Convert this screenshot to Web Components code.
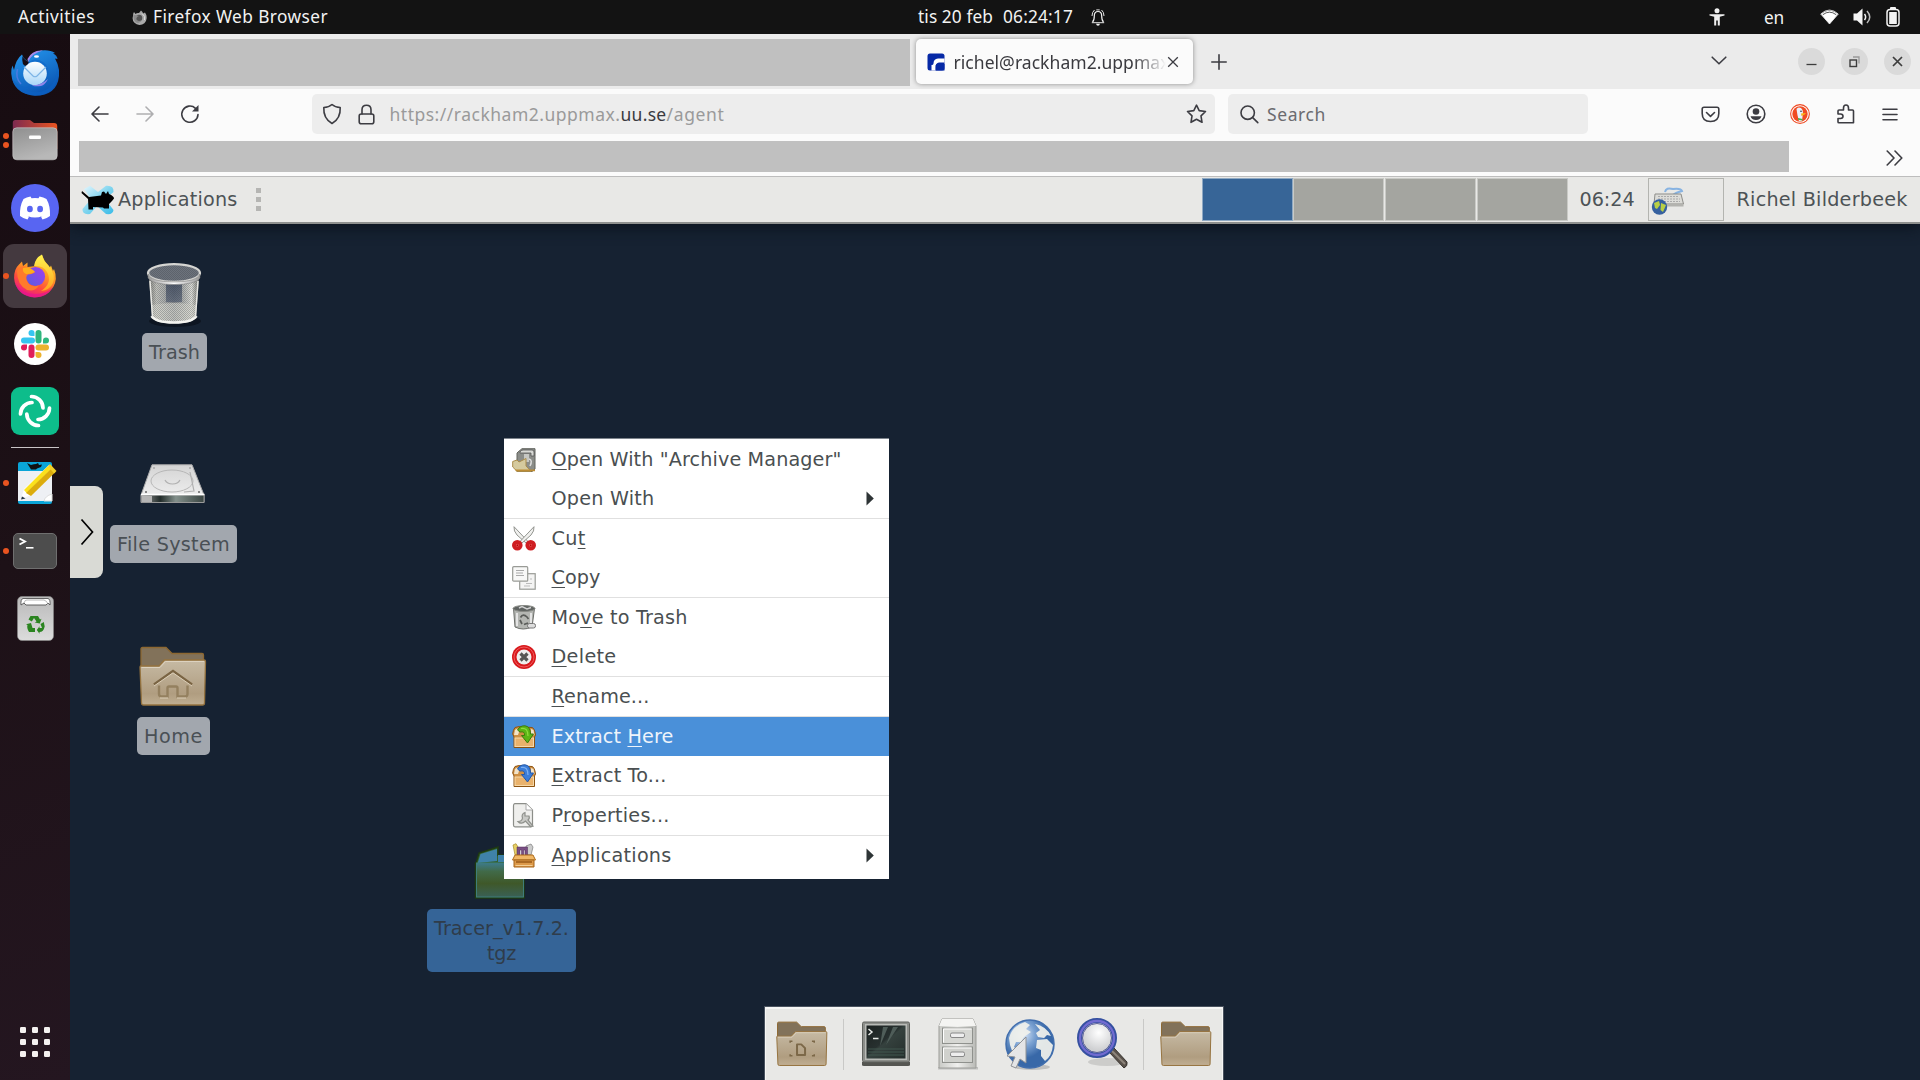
<!DOCTYPE html>
<html lang="en">
<head>
<meta charset="utf-8">
<title>Remote desktop</title>
<style>
html,body{margin:0;height:100%;overflow:hidden;background:#162232}
</style>
</head>
<body>
<desktop-shell></desktop-shell>
<script>
const FOLDER = (extra) => `<defs><linearGradient id="g" x2="0" y2="1"><stop offset="0" stop-color="#c6baa4"/><stop offset=".75" stop-color="#b09d80"/><stop offset="1" stop-color="#c0ae92"/></linearGradient></defs>
<path d="M2 30V3Q2 1.500 3.500 1.500H27L33 7.500H63Q64.500 7.500 64.500 9V30Z" fill="#82725a" stroke="#8d6832" stroke-width="1.300"/>
<path d="M1 21Q1 20 2 20H20L25.500 14H65Q66.500 14 66.500 15.500L65.500 57Q65.500 59 63.500 59H4.500Q2.500 59 2.500 57Z" fill="url(#g)" stroke="#95733f" stroke-width="1.300"/>
<path d="M2.500 21.500H21L26.500 15.500H65" fill="none" stroke="#dcd2c0"/>${extra}`;
const BOX = (a, b, c) => `<path d="M3 2.500Q7 .8 12 2L20 2.500Q22.500 3 23.500 10L22.500 12V22.500H2V12L.7 9Q1 5 3 2.500Z" fill="#cf9044" stroke="#8d5310" stroke-width="1"/><path d="M3 5Q5 3 8 4L6 10H2ZM19 4L21.500 5L22.500 10H19Z" fill="#f2e3c8"/><rect x="3" y="13" width="18.500" height="8.500" fill="#e9b26c" stroke="#f7d9a8" stroke-width="1"/><path d="M5.500 5Q8 .5 13 .8Q18.500 1.500 18.500 9H21.500L15.500 18L9.500 10.500H12.500Q13 6 8 7Z" fill="${a}" stroke="${b}" stroke-width="1"/><path d="M9 3.500Q16 2 16 11" fill="none" stroke="${c}" stroke-width="1.200"/>`;
const S = 'fill="none" stroke="#3c3c42" stroke-width="1.600" stroke-linecap="round" stroke-linejoin="round"';
const ICONS = {
/* status bar */
foxgrey:[15,15,`<path d="M1 6Q1 3 2 2L3.500 4Q5 2.500 7 3L9 .5Q11 2 11 3.500L13 2.500Q15 5 14.600 8.500A7 6.700 0 0 1 .6 8Z" fill="#a9a9a9"/><circle cx="7" cy="8" r="3.300" fill="#555"/><path d="M1.500 5Q4 5 7 6Q4 7 4.500 9.500Q6 12 10 10Q8 14 4 12.500Q1 10 1.500 5Z" fill="#8a8a8a"/><path d="M10 3.500Q14 6 12.500 10" fill="none" stroke="#e0e0e0"/>`],
bell:[14,17,`<path d="M1.500 13Q3.300 11.500 3.300 7Q3.300 2.500 7 2.500T10.700 7Q10.700 11.500 12.500 13" fill="none" stroke="#f2f2f2" stroke-width="1.200"/><path d="M.8 13.700H13.200M1 7Q1 3 3.500 1M13 7Q13 3 10.500 1M5.300 .9H8.700" fill="none" stroke="#e4e4e4" stroke-width="1"/><path d="M5 14.800H9Q8.500 16.800 7 16.800T5 14.800Z" fill="#f2f2f2"/>`],
access:[16,18,`<circle cx="8" cy="2.700" r="2.500" fill="#f0f0f0"/><path d="M.5 6.200H15.500V7.600L10.800 8.700V17.500H8.800V12.500H7.200V17.500H5.200V8.700L.5 7.600Z" fill="#f0f0f0"/>`],
wifi:[19,16,`<path d="M.7 5Q9.500-3 18.300 5L9.500 15Z" fill="none" stroke="#c4c4c4" stroke-width="1"/><path d="M2 6.200Q9.500 0 17 6.200L9.500 15Z" fill="#fff"/><path d="M1 5Q9.500-2 18 5L16.600 6.400Q9.500 .8 2.400 6.400Z" fill="#fff"/><path d="M2.800 5.700Q9.500 .6 16.200 5.700" stroke="#131313" fill="none" stroke-width=".7"/>`],
volume:[19,18,`<path d="M.5 5.500H4L9.500 .5V17.500L4 12.500H.5Z" fill="#f4f4f4"/><path d="M11.500 6Q13.800 9 11.500 12" fill="none" stroke="#f4f4f4" stroke-width="1.500"/><path d="M14 3Q19.500 9 14 15" fill="none" stroke="#bbb" stroke-width="1.500"/>`],
battery:[14,20,`<rect x="1" y="2.500" width="12" height="16.500" rx="3" fill="none" stroke="#f4f4f4" stroke-width="1.500"/><rect x="4" y="0" width="6" height="3" rx="1" fill="#f4f4f4"/><rect x="3.200" y="5" width="7.600" height="12" fill="#f4f4f4"/>`],
/* browser chrome */
favicon:[18,18,`<rect x=".5" y=".5" width="17" height="17" rx="2.500" fill="#0629a6"/><path d="M17.500 5.500H11Q6.500 6 6.500 10.500Q6.500 12 4.500 12V17.500H8.500V14Q8.500 10 12 9.500H17.500Z" fill="#fff"/><path d="M10 11H17.500V17.500H8.800V12.500Q9 11 10 11Z" fill="#0629a6"/>`],
close:[12,12,`<path d="M1.200 1.200L10.800 10.800M10.800 1.200L1.200 10.800" fill="none" stroke="#3c3c42" stroke-width="1.300"/>`],
plus:[16,16,`<path d="M8 .8V15.200M.8 8H15.200" ${S}/>`],
down:[16,9,`<path d="M1.200 1.200L8 7.800L14.800 1.200" ${S}/>`],
min:[27,27,`<circle cx="13.500" cy="13.500" r="13.500" fill="#dadada"/><path d="M8.500 16.500H18.500" stroke="#3d3d3d" stroke-width="1.300"/>`],
restore:[27,27,`<circle cx="13.500" cy="13.500" r="13.500" fill="#dadada"/><path d="M12 9H18V15.500" stroke="#999" fill="none" stroke-width="1.300"/><rect x="9" y="12" width="6.500" height="6.500" stroke="#3d3d3d" stroke-width="1.400" fill="none"/>`],
winclose:[27,27,`<circle cx="13.500" cy="13.500" r="13.500" fill="#dadada"/><path d="M9 9L18 18M18 9L9 18" stroke="#3d3d3d" stroke-width="1.700"/>`],
back:[18,16,`<path d="M17 8H1.300M8 1L1 8L8 15" ${S}/>`],
fwd:[18,16,`<g opacity=".4"><path d="M1 8H16.700M10 1L17 8L10 15" ${S}/></g>`],
reload:[20,20,`<path d="M15.500 4.300A8.100 8.100 0 1 0 18 10.500" ${S}/><path d="M18.500 1V7.500H12Z" fill="#3c3c42"/>`],
shield:[20,22,`<path d="M10 1.500Q13 4.300 18.200 4.500Q18.800 15.500 10 20.500Q1.200 15.500 1.800 4.500Q7 4.300 10 1.500Z" ${S}/>`],
lock:[17,21,`<rect x="1.200" y="10" width="14.600" height="9.800" rx="2" ${S}/><path d="M4 10V5.800Q4 1.300 8.500 1.300T13 5.800V10" ${S}/>`],
star:[21,20,`<path d="M10.500 1.200L13.200 6.600L19.500 7.500L15 11.800L16 18.300L10.500 15.200L5 18.300L6 11.800L1.500 7.500L7.800 6.600Z" ${S}/>`],
find:[19,19,`<circle cx="7.700" cy="7.700" r="6.700" ${S}/><path d="M12.700 12.700L17.800 17.600" ${S}/>`],
pocket:[19,17,`<path d="M3 1.200H16Q17.800 1.200 17.800 3V7.500Q17.800 15.500 9.500 15.500T1.200 7.500V3Q1.200 1.200 3 1.200Z" ${S}/><path d="M5.500 6.500L9.500 10.300L13.500 6.500" ${S}/>`],
account:[20,20,`<circle cx="10" cy="10" r="8.800" ${S}/><circle cx="10" cy="7.500" r="3.300" fill="#3c3c42"/><path d="M4.500 12.300H15.500Q14.500 16 10 16T4.500 12.300Z" fill="#3c3c42"/>`],
duck:[20,20,`<circle cx="10" cy="10" r="9.900" fill="#ee4a23"/><circle cx="10" cy="10" r="8.800" fill="#fff"/><circle cx="10" cy="10" r="7.700" fill="#f04c22"/><path d="M6.500 5Q8 2.500 11 4Q13.500 6 13 9L12 16.800Q10 17.500 9 17.300Q7 10 6.500 5Z" fill="#e9f1fb"/><path d="M11 9.500L16 9Q15 11 11.500 12Z" fill="#f9b515"/><path d="M8 14L12.500 15V16.500L8 15.800Z" fill="#4cae4c"/><circle cx="11" cy="7.300" r=".8" fill="#234"/>`],
puzzle:[18,20,`<path d="M6.500 6V4Q6.500 1 9 1T11.500 4V6H15.500Q16.500 6 16.500 7V18.800H2Q1 18.800 1 18V14.500H3.500Q6 14.300 6 12.200T3.500 10H1V7Q1 6 2 6Z" ${S}/>`],
menu:[16,13,`<path d="M1 1.200H15M1 6.500H15M1 11.800H15" ${S}/>`],
more:[17,16,`<path d="M1.200 1L8 8L1.200 15M9 1L15.800 8L9 15" ${S}/>`],
handle:[14,28,`<path d="M1.500 1.500L12.500 14L1.500 26.500" stroke="#000" stroke-width="1.700" fill="none"/>`],
/* launcher */
tbird:[48,46,`<defs><linearGradient id="g" x2=".5" y2="1"><stop offset="0" stop-color="#269af0"/><stop offset="1" stop-color="#0b57b5"/></linearGradient><linearGradient id="w" x2="0" y2="1"><stop offset="0" stop-color="#fff"/><stop offset="1" stop-color="#a8d6f8"/></linearGradient></defs><path d="M.3 24Q0 19 1.500 15.500L3 20Q5 9 11 4.500Q12 8 15 10L17 12Q19 3 30 .5Q39 -.5 44 3L42 3.500Q46 5 46.500 9L44 8.500Q49 17 48 26Q46 45.500 24 45.800Q2 44 .3 24Z" fill="url(#g)"/><path d="M11.500 6Q10 16 16 16L18 12Q13 10 11.500 6Z" fill="#160d14"/><path d="M17 12Q21 3 32 .5Q21 -.5 16.500 9Z" fill="#a58bec"/><path d="M17 13Q21 8 28 10Q42 15 35 33Q32 42 12 37Q24 47 38 38Q47 30 46 14Q50 45 24 45.800Q6 44 1 29Q12 40 20 36Z" fill="#0d62c4" opacity=".55"/><circle cx="24" cy="23.500" r="11.800" fill="url(#w)"/><path d="M13 17L22 26Q24 27.500 26 26L35 17" fill="none" stroke="#7cb4e6" stroke-width="1.200"/><path d="M21 35Q29 36 37 29Q34 35 30 36Q22 37 21 35Z" fill="#8e85e8"/><path d="M6.500 19Q4 28 10 34" fill="none" stroke="#4d7be0" stroke-width="1.500"/><ellipse cx="25.500" cy="6.500" rx="2.500" ry="1.300" fill="#fff"/>`],
files:[46,42,`<defs><linearGradient id="g" x2="1"><stop offset="0" stop-color="#7d2a50"/><stop offset="1" stop-color="#ea5420"/></linearGradient><linearGradient id="w" x2=".4" y2="1"><stop offset="0" stop-color="#8f8f8f"/><stop offset="1" stop-color="#b8b8b8"/></linearGradient></defs><path d="M.8 30V3.500Q.8 1 3.300 1H18L22 4H42Q45.200 4 45.200 7V30Z" fill="url(#g)"/><rect x=".8" y="8.800" width="44.400" height="32" rx="4" fill="url(#w)" stroke="#d0d0d0" stroke-width=".6"/><rect x="17" y="16.500" width="12" height="3.500" rx="1.300" fill="#fff"/>`],
discord:[48,48,`<circle cx="24" cy="24" r="24" fill="#5865f2"/><path d="M19.500 12.500L20.500 14.200Q24 13.600 27.500 14.200L28.500 12.500Q32.500 13 35.500 15Q39.500 22 39 32Q35.500 34.700 31.500 35.500L30 32.800L31.500 32Q24 35 16.500 32L18 32.800L16.500 35.500Q12.500 34.700 9 32Q8.500 22 12.500 15Q15.500 13 19.500 12.500Z" fill="#fff"/><ellipse cx="18.900" cy="25" rx="2.900" ry="3.200" fill="#5865f2"/><ellipse cx="29.100" cy="25" rx="2.900" ry="3.200" fill="#5865f2"/>`],
firefox:[42,44,`<defs><linearGradient id="g" x1=".8" y1="0" x2=".3" y2="1"><stop offset="0" stop-color="#ffe03a"/><stop offset=".4" stop-color="#ff9a22"/><stop offset=".7" stop-color="#ff4b3e"/><stop offset="1" stop-color="#e8178a"/></linearGradient><linearGradient id="v" x1="1" x2="0" y2="1"><stop offset="0" stop-color="#a33cf0"/><stop offset="1" stop-color="#5360e0"/></linearGradient><linearGradient id="y" x2="0" y2="1"><stop offset="0" stop-color="#fff44f"/><stop offset="1" stop-color="#ffa31f"/></linearGradient></defs><path d="M5 10.500L8 7.500L9 12L13.500 8.500V13L22 12Q21 5 28 1Q30 7 34 11L35.500 14L37 11.500L39 17L40 15Q42 20 41.800 25A20.900 20 0 0 1 .1 24Q0 15 5 10.500Z" fill="url(#g)"/><path d="M20 12Q21 4 28 .5Q29 7 35 12Q42 21 39 29Q36 36 27 37Q39 29 33 18Q29 11 20 12Z" fill="url(#y)"/><circle cx="21.500" cy="22.500" r="9.600" fill="url(#v)"/><path d="M3 17Q7 10 14 13.500L21 18Q19 20 14 20.500Q11 23 13 27Q16 34 25 31.500Q21 38 13 36Q3 31 3 17Z" fill="#ff7a2b"/><path d="M9 14Q16 12 21 18Q16 20.500 12 20Q8 18 9 14Z" fill="#ffae1c"/><path d="M1 29Q8 40 21 40Q33 40 39 33Q33 44 20 43.500Q5 42 1 29Z" fill="#e9178a" opacity=".8"/>`],
slack:[42,42,`<circle cx="21" cy="21" r="21" fill="#fff"/><g stroke-width="6" stroke-linecap="round"><path d="M10 17.500H18" stroke="#36c5f0"/><path d="M24.500 10V17.500" stroke="#2eb67d"/><path d="M24.500 24.500H32" stroke="#ecb22e"/><path d="M17.500 24.500V32" stroke="#e01e5a"/></g><path d="M20.500 13H17.500A3 3 0 1 1 20.500 10Z" fill="#36c5f0"/><path d="M29 20.500V17.500A3 3 0 1 1 32 20.500Z" fill="#2eb67d"/><path d="M21.500 29H24.500A3 3 0 1 1 21.500 32Z" fill="#ecb22e"/><path d="M13 21.500V24.500A3 3 0 1 1 10 21.500Z" fill="#e01e5a"/>`],
element:[48,48,`<rect width="48" height="48" rx="9" fill="#0dbd8b"/><g fill="none" stroke="#fff" stroke-width="3.700" stroke-linecap="round"><path d="M20.500 9.500A11.700 11.700 0 0 1 32 21"/><path d="M38.500 21A11.700 11.700 0 0 1 27 32.500"/><path d="M27.500 38.500A11.700 11.700 0 0 1 15.800 27"/><path d="M9.500 27A11.700 11.700 0 0 1 21 15.500"/></g>`],
pad:[44,42,`<g transform="translate(4)"><path d="M1 2Q1 0 3 0H33Q35 0 35 2V40Q35 42 33 42H3Q1 42 1 40Z" fill="#0aa5d8"/><path d="M1 9H35V39H1Z" fill="#eef0f4"/><path d="M10 1L14 3Q17 2 19 2L21 1L22 3L25 2.500L24 5L20 6.500L19 7.500H14L12.500 5Z" fill="#111"/><path d="M27 39Q28 34 35 32V39Z" fill="#fff" stroke="#ddd"/><path d="M4 37L7 27L32 3L38 9L14 33Z" fill="#fff"/><path d="M7 28L31 4L34.500 7L9.500 31Z" fill="#fbe11c"/><path d="M9 31L34.500 6.500L38.500 10L14 34Z" fill="#dcac0d"/><path d="M31 4L33 2L39.500 9L37 11.500Z" fill="#f2cf26"/><path d="M4 37.500L5 34.500L8.500 36.500Z" fill="#223344"/></g>`],
term:[44,36,`<rect x=".5" y=".5" width="43" height="35" rx="4.500" fill="#4d4d4d" stroke="#6f6f6f"/><path d="M6.500 5.500L12 8.500L6.500 11.500" fill="none" stroke="#fff" stroke-width="1.900"/><path d="M13 14.800H20.500" stroke="#fff" stroke-width="1.600"/>`],
bin:[37,45,`<defs><linearGradient id="g" x2="0" y2="1"><stop offset="0" stop-color="#b9b9b9"/><stop offset="1" stop-color="#dcdcdc"/></linearGradient></defs><rect x=".5" y=".5" width="36" height="44" rx="4.500" fill="url(#g)" stroke="#8a8a8a" stroke-width=".6"/><path d="M4 9Q3.500 3 6 2.500H31Q33.500 3 33 9L31 7L29 9L9 9L7 7Z" fill="#fff" stroke="#555" stroke-width=".9"/><path d="M7 7Q8 3.500 10 4H27Q30 5 31 8" fill="none" stroke="#999" stroke-width=".7"/><g fill="#2b8420"><path d="M13.500 20H21L23 23.500L24.500 22.700L22.800 27.500L17.800 26.500L19.500 25.500L17 22L14.800 25.500L11.500 23.500Z"/><path d="M23.500 28L26.800 26L27.700 30.500Q26.500 36 22.500 36V37.700L19.800 34L22.500 30.300V32H25Z"/><path d="M18 32V36H12Q9.500 32 10.500 29L9 28.200L14 27L15.500 32Z"/></g>`],
grid:[30,30,[0,12,24].map(y=>[0,12,24].map(x=>`<rect x="${x}" y="${y}" width="6" height="6" rx="1.300" fill="#f4f1f0"/>`).join('')).join('')],
/* xfce */
mouse:[34,30,`<defs><linearGradient id="g" x2="1" y2="1"><stop offset="0" stop-color="#e8f8ff"/><stop offset=".5" stop-color="#7fd4ee"/><stop offset="1" stop-color="#3bbce8"/></linearGradient></defs><path d="M3 4L9 .8L17 7L25 .8Q33 0 32.500 7L24 14L32.500 25Q32 30 25 29L16 21L9 29Q1 30 1.500 24L10 14Z" fill="url(#g)"/><path d="M1 6L8 12L20 10.500L21 7L23 6.500L25 9L27 6L28 9Q33 11 33 13.500L31 16L28 19V23.500H23L22 22.500L12 22V24.500H7.500L7 14L.5 8Z" fill="#000"/>`],
keys:[36,34,`<path d="M14 9Q15 4 22 6Q30 5 31 8Q24 10 22 12" fill="none" stroke="#87b3e2" stroke-width="2"/><path d="M4 11H30L32.500 21H3Z" fill="#dcdcd8" stroke="#8d8d89"/><path d="M3 21H32.500V23.500H3Z" fill="#b3b3af"/><path d="M7 13.500H28M7 16H29M7 18.500H29" stroke="#aaa" stroke-dasharray="2 1"/><circle cx="8.500" cy="24" r="7.700" fill="#35609f"/><path d="M3 20L8 18L9 22L6 26L4 25ZM10 20L15 22L12 29L9.500 27Z" fill="#b8cf45"/>`],
trashcan:[56,66,`<defs><linearGradient id="g"><stop offset="0" stop-color="#85857f"/><stop offset=".15" stop-color="#c4c4be"/><stop offset=".3" stop-color="#aeb0ae"/><stop offset=".5" stop-color="#85898e"/><stop offset=".7" stop-color="#b4b6b3"/><stop offset=".85" stop-color="#deded8"/><stop offset="1" stop-color="#777771"/></linearGradient><linearGradient id="d" x2="0" y2="1"><stop offset="0" stop-color="#3a465c"/><stop offset="1" stop-color="#5b6679"/></linearGradient><pattern id="p" width="2" height="2" patternUnits="userSpaceOnUse"><path d="M0 0H1V1H0ZM1 1H2V2H1Z" fill="#3a3f45" opacity=".3"/></pattern><linearGradient id="r"><stop offset="0" stop-color="#999"/><stop offset=".5" stop-color="#fff"/><stop offset="1" stop-color="#999"/></linearGradient></defs><ellipse cx="29" cy="59" rx="26" ry="6" fill="#080d16" opacity=".6"/><path d="M3 17L6 55Q8 61.500 28 61.500T50 55L53 17Z" fill="url(#g)"/><path d="M20 22H36V40H20Z" fill="url(#d)" opacity=".75"/><path d="M6 43Q28 39 50 43V55Q40 60 28 60T6 55Z" fill="#d8d8d0" opacity=".7"/><path d="M3 17L6 55Q8 61.500 28 61.500T50 55L53 17Z" fill="url(#p)"/><path d="M5.500 54Q10 60.500 28 60.500T50.500 54" fill="none" stroke="#f4f4f0" stroke-width="2.500"/><path d="M4 19L6.500 55M52 19L49.500 55" stroke="#e8e8e4" stroke-width="1.500"/><ellipse cx="28" cy="11" rx="26" ry="8.800" fill="#6d737c" stroke="#d5d5d2" stroke-width="2.300"/><ellipse cx="28" cy="11" rx="24" ry="7.500" fill="url(#p)"/><path d="M2 12Q5 20 28 20T54 12V16Q50 22.500 28 22.500T2 16Z" fill="url(#r)" stroke="#777" stroke-width=".5"/>`],
disk:[66,42,`<defs><linearGradient id="g" x2="0" y2="1"><stop offset="0" stop-color="#d4d4d4"/><stop offset="1" stop-color="#f3f3f3"/></linearGradient><linearGradient id="b"><stop offset="0" stop-color="#999"/><stop offset=".3" stop-color="#222c2a"/><stop offset=".55" stop-color="#83908b"/><stop offset="1" stop-color="#3a4542"/></linearGradient></defs><path d="M12 .8H52L64 31V38.500H1V31Z" fill="url(#g)" stroke="#aaa"/><path d="M1.500 31H64V38.500H1.500Z" fill="url(#b)" stroke="#999"/><path d="M1 30.500H64.500" stroke="#fff" stroke-width="1.500"/><path d="M2 32H12V38H2Z" fill="#b5b5b5"/><ellipse cx="32" cy="17" rx="21" ry="11" fill="none" stroke="#b7b7b7"/><path d="M25 16Q27 20 32.500 20T40 16M50 8L54 27L44 28" fill="none" stroke="#b0b0b0" stroke-width="1.200"/><circle cx="6" cy="28" r="1" fill="#666"/><circle cx="59" cy="28" r="1" fill="#666"/><circle cx="14" cy="4" r=".8" fill="#888"/><circle cx="50" cy="4" r=".8" fill="#888"/>`],
home:[68,61,FOLDER(`<path d="M15 38.500L34 25L53 38.500" fill="none" stroke="#7a6443" stroke-width="2.600"/><path d="M20 39.500V48Q20 50.500 22.500 50.500H28.500V42Q28.500 40.500 30 40.500H37Q38.500 40.500 38.500 42V50.500H46Q48.500 50.500 48.500 48V39.500" fill="none" stroke="#94805f" stroke-width="2.400"/><path d="M21 52H29M38 52H47M15 40L34 26.800L53 40" fill="none" stroke="#dccfb8" stroke-width="1"/>`)],
folder:[68,61,FOLDER('')],
deskfolder:[68,61,FOLDER(`<path d="M27.500 31H33L38 36V45H27.500Z" fill="none" stroke="#7c6848" stroke-width="2.600" stroke-linejoin="round"/><path d="M18.500 29V27H21.500M50 29V27H47M18.500 44V46H21.500M50 44V46H47" fill="none" stroke="#7c6848" stroke-width="2"/>`)],
tgz:[52,54,`<defs><linearGradient id="g" x2="0" y2="1"><stop offset="0" stop-color="#3d7a8a"/><stop offset=".25" stop-color="#416a48"/><stop offset=".6" stop-color="#3f5829"/><stop offset="1" stop-color="#3a6055"/></linearGradient></defs><path d="M2 17L5 7L24 1V9H50V52H1.500V17Z" fill="#33622f" stroke="#1e3a12" stroke-width="1.500"/><path d="M4 16L6.500 8L23 3V15L4 17Z" fill="#3f82a8"/><rect x="2.500" y="17" width="47" height="34" fill="url(#g)" stroke="#3f7d7a"/><path d="M24 9H50V16H24Z" fill="#3d7fa8"/>`],
/* bottom dock */
xterm:[50,46,`<defs><linearGradient id="g" x2="1" y2="1"><stop offset="0" stop-color="#1c2221"/><stop offset=".45" stop-color="#27302f"/><stop offset=".5" stop-color="#35413e"/><stop offset="1" stop-color="#242d2b"/></linearGradient></defs><path d="M1 41H49V44Q49 45 47 45H3Q1 45 1 44Z" fill="#555652"/><rect x="1.500" y="1" width="47" height="40" rx="1.500" fill="#8c8e8a" stroke="#60625e"/><rect x="4" y="3" width="42" height="36" fill="#b9bbb7"/><rect x="5.500" y="4.500" width="39" height="33" fill="url(#g)"/><path d="M7 28H43M7 31H43M7 34H43" stroke="#40564f" stroke-width="1.200"/><path d="M22 6H27L19 25ZM32 6H37L25 24Z" fill="#4f5d59"/><path d="M7.500 8L11 11L7.500 14M12 17.500H17.500" fill="none" stroke="#e8ebe8" stroke-width="1.500"/>`],
cabinet:[42,52,`<defs><linearGradient id="g"><stop offset="0" stop-color="#c9cac6"/><stop offset=".5" stop-color="#f0f0ee"/><stop offset="1" stop-color="#b9bab6"/></linearGradient></defs><path d="M1 49H41V51.500H1Z" fill="#999" opacity=".5"/><path d="M5 1H36L39 8V50H2V8Z" fill="url(#g)" stroke="#9c9d99"/><path d="M5 1H36L39 8H2Z" fill="#f4f4f2"/><rect x="5.500" y="10" width="30" height="15.500" fill="#d6d7d3" stroke="#8f918d"/><rect x="5.500" y="29" width="30" height="15.500" fill="#d0d1cd" stroke="#8f918d"/><path d="M6.500 24.500V11H34.500M6.500 43.500V30H34.500" fill="none" stroke="#fff"/><rect x="13.500" y="15" width="14" height="4.500" rx="1.500" fill="#eee" stroke="#888"/><rect x="13.500" y="34" width="14" height="4.500" rx="1.500" fill="#eee" stroke="#888"/>`],
globe:[52,52,`<defs><radialGradient id="g" cx=".35" cy=".3"><stop offset="0" stop-color="#dde9f7"/><stop offset=".5" stop-color="#7ba2d2"/><stop offset="1" stop-color="#3868a8"/></radialGradient></defs><ellipse cx="28" cy="49" rx="18" ry="3" fill="#888" opacity=".4"/><circle cx="26" cy="26" r="24" fill="url(#g)" stroke="#416ead" stroke-width="1.500"/><path d="M5 20Q8 8 21 4L26 7L22 11L27 14L20 19L17 24L12 24L10 29L15 33L14 40Q6 34 5 20ZM31 6Q42 8 47 18L43 17L40 20L34 19L32 15L36 12ZM33 22L43 21L49 27Q48 38 41 43L37 38V32L32 30Z" fill="#f0f1ec" opacity=".93"/><path d="M22 19V45L16 41L12 50L7 48L11 39L3 38Z" fill="#e4e5e6" stroke="#8f9296"/>`],
glass:[54,54,`<defs><radialGradient id="g" cx=".55" cy=".35"><stop offset="0" stop-color="#fff"/><stop offset="1" stop-color="#cfd0d2"/></radialGradient></defs><ellipse cx="32" cy="45" rx="19" ry="4" fill="#777" opacity=".25"/><path d="M34 35L39 31L52 45Q53 49 49 51Z" fill="#59524b" stroke="#38342f"/><path d="M37 34L50 47" stroke="#8d857b" stroke-width="2"/><circle cx="22" cy="21" r="17.500" fill="url(#g)" stroke="#3550a0" stroke-width="5"/><circle cx="22" cy="21" r="17" fill="none" stroke="#716bd0" stroke-width="2.300"/><circle cx="22" cy="21" r="14.500" fill="none" stroke="#3b3f86" stroke-width=".8"/>`],
/* context menu */
archive:[24,24,`<path d="M6 4L10 .7H23V21L20 23.500H5V5Z" fill="#8b8d89" stroke="#63655f"/><path d="M8 4Q9 2 11 2H20Q22 2 22 4V8H19V5H8Z" fill="#d8d9d5" stroke="#555" stroke-width=".8"/><path d="M12 6H17V14H12Z" fill="#c6c7c3"/><path d="M17 11Q21 12 18 18" fill="none" stroke="#ddd" stroke-width="1.500"/><path d="M.7 13.500L5 12L7 14L14 10.500V18L19 23.300H5L.7 19Z" fill="#d5ca9e" stroke="#a98c4a"/><path d="M4 23.300H23V21.500H3Z" fill="#bc8c35"/>`],
cut:[24,25,`<path d="M2 .7Q1.500 5 5 9L14 17L16 15.500Z" fill="#f0f0ee" stroke="#888a85" stroke-width=".9"/><path d="M22 .7Q22.500 5 19 9L10 17L8 15.500Z" fill="#f0f0ee" stroke="#888a85" stroke-width=".9"/><g fill="#e88" stroke="#cf1e22" stroke-width="4"><ellipse cx="5.300" cy="19.300" rx="3.300" ry="3.300"/><ellipse cx="18.700" cy="19.300" rx="3.300" ry="3.300"/></g><circle cx="5.300" cy="19.300" r="1" fill="#b00"/><circle cx="18.700" cy="19.300" r="1" fill="#b00"/>`],
copy:[24,24,`<rect x="7.700" y="7.700" width="15.500" height="15.500" fill="#f4f4f3" stroke="#999b96" stroke-width="1.200"/><path d="M14 17.500H20M12 20H18M18 13H20" stroke="#bbb"/><rect x=".7" y=".7" width="15" height="14.500" rx="1" fill="#f8f8f7" stroke="#999b96" stroke-width="1.200"/><path d="M4 4.500H12M4 7H11M4 9.500H12" stroke="#aaa"/>`],
trash:[24,25,`<path d="M1.500 3.500L3 22Q11 26 20 22L22.500 3.500Z" fill="#b4b6b2" stroke="#6c6e6a"/><ellipse cx="12" cy="3.500" rx="11" ry="3" fill="#5f6361" stroke="#888a85"/><path d="M7 3L10 1.500L15 4L19 2.500" stroke="#d0d0d0" fill="none" stroke-width="1.500"/><path d="M5 8V21M19 8V18" stroke="#e4e4e4" stroke-width="2"/><path d="M8.500 12.500Q11 8 15 12L16.500 14M8 15L10 19M12 19.500L16 18" fill="none" stroke="#5a5c59" stroke-width="1.700"/><rect x="15.500" y="18.500" width="8" height="4.500" rx="2" fill="#ddd" stroke="#777"/>`],
del:[24,24,`<circle cx="12" cy="12" r="12" fill="#d8191c"/><circle cx="12" cy="12" r="10" fill="none" stroke="#f05a5c" stroke-width="1"/><circle cx="12" cy="12" r="7.500" fill="#eeeeec"/><path d="M8.500 8.500L15.500 15.500M15.500 8.500L8.500 15.500" stroke="#555753" stroke-width="3.200"/>`],
exgreen:[24,24,BOX('#5cb515','#3c7a0c','#8ddb3c')],
exblue:[24,24,BOX('#3b7dd8','#2458a8','#7db0f0')],
props:[24,25,`<path d="M1.500 3Q1.500 .7 3 .7H14L20.500 7V22Q20.500 23.800 19 23.800H3Q1.500 23.800 1.500 22Z" fill="#efefed" stroke="#8c8e89" stroke-width="1.200"/><path d="M14 .7V7H20.500" fill="#fff" stroke="#aaa"/><path d="M6 18.500Q10 18.500 10.500 15Q9 11 13 9.500L13 13H17Q18 15.500 16 17L21 23L18.500 23.500L13.500 18Q9 22 6 18.500Z" fill="#c9cac7" stroke="#8f918c" stroke-width="1.200"/>`],
apps:[24,25,`<path d="M3 12L1 2L4 .7L6 4L6 12Z" fill="#e6cf65" stroke="#a98d2a" stroke-width=".7"/><path d="M14 11V3L19 1L21 4L19 12Z" fill="#ccc" stroke="#888" stroke-width=".8"/><path d="M5 12V4H15.500V12H13V7H11.800V12H9.500V7H8V12Z" fill="#7a4f84" stroke="#4c2a56" stroke-width=".5"/><path d="M3 12H21L23.500 17H.5Z" fill="#f0b766" stroke="#ad6b1a"/><path d="M2 17H22V24H2Z" fill="#dd9a4a" stroke="#a5641a"/><path d="M4 19H20" stroke="#9a5a18" stroke-width="1.500"/><path d="M3.500 22.500H20.500" stroke="#f4cf95"/>`],
tri:[8,15,`<path d="M.5 .5L7.800 7.500L.5 14.500Z" fill="#2e3436"/>`]
};
class El extends HTMLElement{
  constructor(){super();this.attachShadow({mode:'open'});}
  put(css,html){const t=document.createElement('template');t.innerHTML=`<style>${css}</style>${html}`;this.shadowRoot.replaceChildren(t.content.cloneNode(true));}
}
class UiIcon extends El{
  connectedCallback(){
    const [w,h,m]=ICONS[this.getAttribute('n')];
    const W=this.getAttribute('w')||w,H=this.getAttribute('h')||h;
    this.put(`:host{display:block;flex:none;width:${W}px;height:${H}px}svg{display:block}`,
    `<svg width="${W}" height="${H}" viewBox="0 0 ${w} ${h}" preserveAspectRatio="none">${m}</svg>`);
  }
}
/* One line of text whose tracking is adjusted to a given advance width. */
class FitText extends El{
  connectedCallback(){
    this.put(':host{display:block;flex:none;white-space:pre}span{display:inline-block}','<span><slot></slot></span>');
    const w=+this.getAttribute('w'),s=this.shadowRoot.querySelector('span');
    const n=this.textContent.length,nat=s.getBoundingClientRect().width;
    s.style.letterSpacing=((w-nat)/n).toFixed(4)+'px';
    this.style.width=w+'px';
  }
}
class StatusBar extends El{
  connectedCallback(){this.put(`:host{display:flex;align-items:center;height:34px;flex:none;background:#131313;color:#f2f2f2;font:17.300px "Noto Sans",sans-serif;box-sizing:border-box;padding-left:18px}
  fit-text{margin-top:-1px}.e{margin-top:1px}`,
  `<fit-text w="77">Activities</fit-text><ui-icon n="foxgrey" style="margin-left:36.500px"></ui-icon><fit-text w="175" style="margin-left:6.500px">Firefox Web Browser</fit-text>
  <fit-text w="75" style="margin-left:590px">tis 20 feb</fit-text><fit-text w="70" style="margin-left:10px">06:24:17</fit-text><ui-icon n="bell" style="margin-left:18px"></ui-icon>
  <ui-icon n="access" style="margin-left:604px"></ui-icon><fit-text class="e" w="20" style="margin-left:39px">en</fit-text><ui-icon n="wifi" style="margin-left:35.500px"></ui-icon><ui-icon n="volume" style="margin-left:14px"></ui-icon><ui-icon n="battery" style="margin-left:14.500px"></ui-icon>`);}
}
class DockItem extends El{
  connectedCallback(){
    const d=+this.getAttribute('dots')||0;
    this.put(`:host{display:grid;place-items:center;width:64px;height:64px;margin:0 3px;border-radius:11px;flex:none;position:relative}
    :host([active]){background:#44393f}
    .d{position:absolute;left:0;top:0;height:100%;display:flex;flex-direction:column;justify-content:center;gap:3px}
    i{width:6px;height:6px;border-radius:3px;background:#e95420}`,
    `<ui-icon n="${this.getAttribute('n')}"></ui-icon><div class="d">${'<i></i>'.repeat(d)}</div>`);
  }
}
class SideDock extends El{
  connectedCallback(){this.put(`:host{display:flex;flex-direction:column;width:70px;flex:none;box-sizing:border-box;padding:6.500px 0 6px;gap:3.800px;background:linear-gradient(160deg,#170c11,#1d1117 50%,#241620 100%)}
  hr{width:48px;height:1px;border:0;margin:-.5px 11px -.5px;background:#c9c4c6;flex:none}dock-item:last-child{margin-top:auto}`,
  `<dock-item n="tbird"></dock-item><dock-item n="files" dots="2"></dock-item><dock-item n="discord"></dock-item><dock-item n="firefox" dots="1" active></dock-item><dock-item n="slack"></dock-item><dock-item n="element"></dock-item><hr><dock-item n="pad" dots="1"></dock-item><dock-item n="term" dots="1"></dock-item><dock-item n="bin"></dock-item><dock-item n="grid"></dock-item>`);}
}
class BrowserChrome extends El{
  connectedCallback(){this.put(`:host{display:block;flex:none;font:17.500px "Noto Sans",sans-serif;color:#3a3a3f;position:relative;z-index:2}
  div{box-sizing:border-box}
  .tabs{display:flex;align-items:center;height:55px;background:#ebebeb;padding-left:8px;padding-bottom:0}
  .gone{background:#c0c0c0;width:832px;height:47px;margin-top:2px}
  .tab{display:flex;align-items:center;width:277px;height:45px;margin:0 0 0 6px;background:#fbfbfb;border-radius:5px;box-shadow:0 0 5px rgba(0,0,0,.4);padding-left:11px}
  .title{width:218px;margin-left:8.500px;-webkit-mask:linear-gradient(90deg,#000 180px,transparent 212px)}
  .nav{display:flex;align-items:center;height:52px;background:#fbfbfb;padding:0 0 2px 21px}
  .box{display:flex;align-items:center;height:40px;background:#ededed;border-radius:5px}
  .box fit-text{margin-top:-1px}
  .url{width:903px;margin-left:112px;padding-left:10px;color:#9a9a9a}.url b{font-weight:400;color:#3a3a3f}
  .srch{width:360px;margin-left:13px;padding-left:12px;color:#6b6b6f}
  .marks{display:flex;align-items:center;height:36px;background:#fbfbfb;padding:0 17px 0 9px;border-bottom:1px solid #bdbdbd}
  .marks div{width:1710px;height:31px;background:#c0c0c0;margin-bottom:4px}.marks ui-icon{margin-left:auto;margin-top:-2px}`,
  `<div class="tabs"><div class="gone"></div><div class="tab"><ui-icon n="favicon"></ui-icon><div class="title"><fit-text w="216">richel@rackham2.uppmax</fit-text></div><ui-icon n="close" style="margin-left:-5px"></ui-icon></div>
  <ui-icon n="plus" style="margin-left:18px"></ui-icon><ui-icon n="down" style="margin-left:483.500px;margin-top:-2px"></ui-icon><ui-icon n="min" style="margin-left:71px"></ui-icon><ui-icon n="restore" style="margin-left:16px"></ui-icon><ui-icon n="winclose" style="margin-left:16px"></ui-icon></div>
  <div class="nav"><ui-icon n="back"></ui-icon><ui-icon n="fwd" style="margin-left:27px"></ui-icon><ui-icon n="reload" style="margin-left:26px"></ui-icon>
  <div class="box url"><ui-icon n="shield"></ui-icon><ui-icon n="lock" style="margin-left:16px"></ui-icon><fit-text w="231" style="margin-left:14.500px">https://rackham2.uppmax.</fit-text><fit-text w="46"><b>uu.se</b></fit-text><fit-text w="58">/agent</fit-text><ui-icon n="star" style="margin-left:461.500px"></ui-icon></div>
  <div class="box srch"><ui-icon n="find"></ui-icon><fit-text w="59" style="margin-left:8px">Search</fit-text></div>
  <ui-icon n="pocket" style="margin-left:112.500px"></ui-icon><ui-icon n="account" style="margin-left:26px"></ui-icon><ui-icon n="duck" style="margin-left:24.500px"></ui-icon><ui-icon n="puzzle" style="margin-left:27px"></ui-icon><ui-icon n="menu" style="margin-left:27px"></ui-icon></div>
  <div class="marks"><div></div><ui-icon n="more"></ui-icon></div>`);}
}
class XfcePanel extends El{
  connectedCallback(){this.put(`:host{display:flex;align-items:center;height:47px;flex:none;box-sizing:border-box;background:#e8e8e6;border-bottom:2px solid #8e908e;padding-left:11px;box-shadow:0 3px 16px #0a121c;position:relative;z-index:1}
  .dots{display:flex;flex-direction:column;gap:4px;margin-left:18px}.dots i{width:5px;height:5px;background:#b5b5b3}
  .pager{display:flex;margin-left:941px;gap:.7px}.pager i{width:91px;height:43px;box-sizing:border-box;background:#a4a5a0;border:1px solid #c9cac6}.pager i:first-child{background:#376597;border-color:#8fa9c3}
  .tray{width:76px;height:43px;box-sizing:border-box;border:1px solid #b3b4b0;margin-left:13px;padding:4px 2px}`,
  `<ui-icon n="mouse"></ui-icon><fit-text w="119.500" style="margin-left:3px">Applications</fit-text><div class="dots"><i></i><i></i><i></i></div><div class="pager"><i></i><i></i><i></i><i></i></div>
  <fit-text w="55" style="margin-left:12px">06:24</fit-text><div class="tray"><ui-icon n="keys"></ui-icon></div><fit-text w="171" style="margin-left:13px">Richel Bilderbeek</fit-text>`);}
}
class DeskIcon extends El{
  connectedCallback(){this.put(`:host{position:absolute;display:flex;flex-direction:column;align-items:center}
  .l{box-sizing:border-box;background:#a2a7ae;color:#4a5055;border-radius:5px;height:38px;display:flex;flex-direction:column;align-items:center;justify-content:center;line-height:25px}
  :host([sel]) .l{background:#356497;color:#2f3c4a;height:63px}ui-icon{margin-left:-2px}:host([sel]) ui-icon{margin-left:-4px}`,
  `<ui-icon n="${this.getAttribute('n')}"></ui-icon><div class="l" style="width:${this.getAttribute('lw')}px;margin-top:${this.getAttribute('gap')}px"><slot></slot></div>`);}
}
class MenuItem extends El{
  connectedCallback(){const n=this.getAttribute('n');this.put(`:host{display:flex;align-items:center;height:39px;padding:0 15px 0 8px;color:#4a4f51}
  :host([hot]){background:#4a90d9;color:#eef4fb}.i{width:24px;margin-right:15.500px}.a{margin-left:auto}`,
  `<div class="i">${n?`<ui-icon n="${n}"></ui-icon>`:''}</div><slot></slot>${this.hasAttribute('sub')?'<ui-icon class="a" n="tri"></ui-icon>':''}`);}
}
class ContextMenu extends El{
  connectedCallback(){this.put(`:host{position:absolute;left:434px;top:214px;width:385px;height:441px;box-sizing:border-box;background:#fff;border-top:1px solid #7d848c;padding-top:1.400px;z-index:3}
  hr{border:0;height:1px;margin:0;background:#e0e0e0}u{text-underline-offset:3px;text-decoration-thickness:1px}`,
  `<menu-item n="archive"><fit-text w="290"><u>O</u>pen With "Archive Manager"</fit-text></menu-item>
  <menu-item sub><fit-text w="103">Open With</fit-text></menu-item><hr>
  <menu-item n="cut"><fit-text w="34">Cu<u>t</u></fit-text></menu-item>
  <menu-item n="copy"><fit-text w="49"><u>C</u>opy</fit-text></menu-item><hr>
  <menu-item n="trash"><fit-text w="136">Mo<u>v</u>e to Trash</fit-text></menu-item>
  <menu-item n="del"><fit-text w="65"><u>D</u>elete</fit-text></menu-item><hr>
  <menu-item><fit-text w="98"><u>R</u>ename...</fit-text></menu-item><hr>
  <menu-item n="exgreen" hot><fit-text w="122">Extract <u>H</u>ere</fit-text></menu-item>
  <menu-item n="exblue"><fit-text w="115"><u>E</u>xtract To...</fit-text></menu-item><hr>
  <menu-item n="props"><fit-text w="118">P<u>r</u>operties...</fit-text></menu-item><hr>
  <menu-item n="apps" sub><fit-text w="120"><u>A</u>pplications</fit-text></menu-item>`);}
}
class BottomDock extends El{
  connectedCallback(){this.put(`:host{position:absolute;left:695px;bottom:0;width:458px;height:73px;box-sizing:border-box;background:#e8e8e6;border:solid #f6f6f5;border-width:2px 1px 0;outline:1px solid #7d848c80;display:flex;align-items:center;padding-bottom:1px}
  div{width:72px;display:grid;place-items:center;flex:none}i{width:1px;height:51px;background:#c9c9c7;margin:0 6px 0 5px;flex:none}`,
  `<div><ui-icon n="deskfolder" w="52" h="46"></ui-icon></div><i></i><div><ui-icon n="xterm"></ui-icon></div><div><ui-icon n="cabinet"></ui-icon></div><div><ui-icon n="globe"></ui-icon></div><div><ui-icon n="glass" style="margin-left:-1px"></ui-icon></div><i></i><div><ui-icon n="folder" w="52" h="46"></ui-icon></div>`);}
}
class DesktopShell extends El{
  connectedCallback(){this.put(`:host{display:flex;flex-direction:column;width:1920px;height:1080px;overflow:hidden}
  .main{display:flex;flex:1;min-height:0}.win{display:flex;flex-direction:column;flex:1;min-width:0;overflow:hidden}
  .remote{display:flex;flex-direction:column;flex:1;font:19.200px "DejaVu Sans",sans-serif;color:#4d5356}
  .desk{flex:1;position:relative;background:#162232}
  .tab{position:absolute;left:0;top:262px;width:33px;height:92px;background:#d9dad5;border-radius:0 8px 8px 0;display:grid;place-items:center;box-sizing:border-box}`,
  `<status-bar></status-bar><div class="main"><side-dock></side-dock><div class="win"><browser-chrome></browser-chrome>
  <div class="remote"><xfce-panel></xfce-panel><div class="desk">
  <desk-icon n="trashcan" lw="65" gap="5" style="left:72px;top:38px"><fit-text w="51">Trash</fit-text></desk-icon>
  <desk-icon n="disk" lw="127" gap="19" style="left:40px;top:240px"><fit-text w="113">File System</fit-text></desk-icon>
  <desk-icon n="home" lw="73" gap="10" style="left:67px;top:422px"><fit-text w="59">Home</fit-text></desk-icon>
  <desk-icon sel n="tgz" lw="149" gap="9" style="left:357px;top:622px"><fit-text w="135">Tracer_v1.7.2.</fit-text><fit-text w="29">tgz</fit-text></desk-icon>
  <context-menu></context-menu><bottom-dock></bottom-dock><div class="tab"><ui-icon n="handle"></ui-icon></div>
  </div></div></div></div>`);}
}
customElements.define('desktop-shell',DesktopShell);
customElements.define('status-bar',StatusBar);
customElements.define('side-dock',SideDock);
customElements.define('dock-item',DockItem);
customElements.define('browser-chrome',BrowserChrome);
customElements.define('xfce-panel',XfcePanel);
customElements.define('desk-icon',DeskIcon);
customElements.define('context-menu',ContextMenu);
customElements.define('menu-item',MenuItem);
customElements.define('bottom-dock',BottomDock);
customElements.define('ui-icon',UiIcon);
customElements.define('fit-text',FitText);
</script>
</body>
</html>
